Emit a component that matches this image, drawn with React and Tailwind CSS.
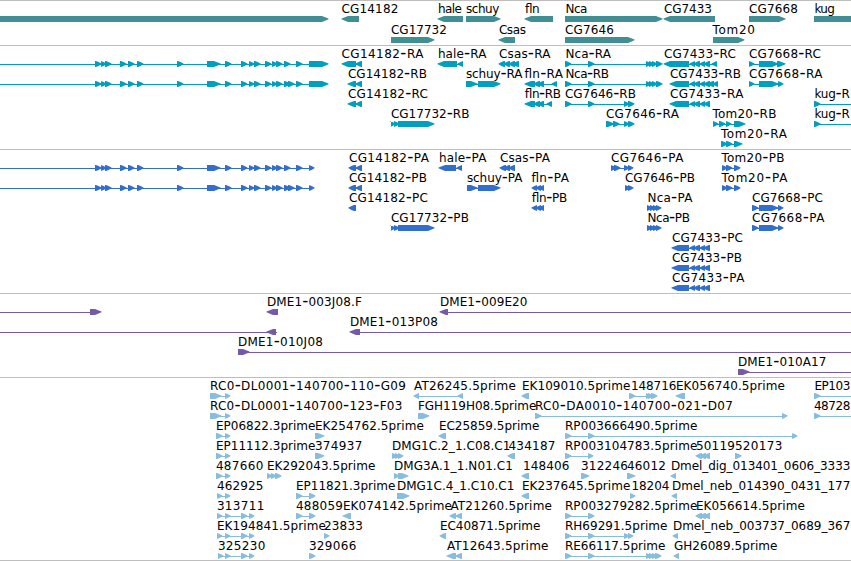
import React from 'react'

const WIDTH = 851
const R = 1
const L = -1

// exon sets shared by several transcripts
const KUG_5 = [[95, 101], [101, 106], [105, 111], [120, 126], [128, 134], [137, 143], [177, 183], [207, 220], [225, 231], [241, 247], [249, 254], [254, 260], [265, 271], [272, 277], [276, 282], [284, 290]]
const NCA = [[565, 571], [588, 594], [646, 651], [649, 654], [652, 657], [656, 662]]
const NCA_P = [[647, 652], [650, 655], [653, 658], [656, 661]]
const CG7433 = [[690, 695], [694, 700], [700, 705], [704, 710]]
const CG7668 = [[759, 778], [778, 783]]
const TOM20_P = [[722, 727], [726, 732], [734, 740]]
const FLN_P = [[532, 537], [536, 541], [539, 544]]
const EP_3 = [[216, 222], [225, 230]]
const EST_4 = [[217, 222], [225, 230], [241, 247], [249, 254]]

// feature: [label, label start, label end, direction, exons, line start, line end]
const tracks = [
    {
        id: 'gene',
        color: 'text-[#3f8f94]',
        rowClass: 'h-[21px]',
        boxClass: 'h-[45px]',
        rows: [
            [
                ['', 0, 0, R, [[-9, 328]]],
                ['CG14182', 342, 398, L, [[342, 359]]],
                ['hale', 438.5, 461.5, L, [[438, 463]]],
                ['schuy', 466.5, 499, R, [[466, 500]]],
                ['fln', 525, 538.5, L, [[525, 553]]],
                ['Nca', 566, 587, R, [[565, 662]]],
                ['CG7433', 664.5, 711.5, L, [[664, 715]]],
                ['CG7668', 749.5, 797.5, R, [[749, 785]]],
                ['kug', 815, 834.5, R, [[814, 870]]],
            ],
            [
                ['CG17732', 391.5, 446.5, R, [[391, 434]]],
                ['Csas', 499.5, 525.5, L, [[499, 515]]],
                ['CG7646', 565.5, 613.5, R, [[565, 634]]],
                ['Tom20', 713, 754.5, R, [[713, 744]]],
            ],
        ],
    },
    {
        id: 'transcript',
        color: 'text-[#009fc0]',
        rowClass: 'h-5',
        boxClass: 'h-[104px]',
        rows: [
            [
                ['', 0, 0, R, [...KUG_5, [296, 302], [309, 328]], 0, 320],
                ['CG14182-RA', 342, 423, L, [[342, 356], [356, 362]]],
                ['hale-RA', 438.5, 486, L, [[438, 457], [458, 463]]],
                ['Csas-RA', 499.5, 550, L, [[499, 505], [504, 510], [509, 515], [513, 519]]],
                ['Nca-RA', 566, 610.5, R, NCA],
                ['CG7433-RC', 664.5, 735.5, L, [[664, 689], ...CG7433, [712, 717]]],
                ['CG7668-RC', 749.5, 820.5, R, [[749, 754], [759, 778], [777, 785]]],
            ],
            [
                ['', 0, 0, R, [...KUG_5, [288, 294], [296, 302], [309, 328]], 0, 320],
                ['CG14182-RB', 348.5, 426.5, L, [[348, 356], [356, 362]]],
                ['schuy-RA', 466.5, 522, R, [[466, 477], [478, 500]]],
                ['fln-RA', 525, 562.5, L, [[525, 535], [534, 540], [538, 544], [552, 557]]],
                ['Nca-RB', 566, 608.5, R, NCA],
                ['CG7433-RB', 670.5, 740.5, L, [[670, 689], ...CG7433, [708, 714], [713, 718]]],
                ['CG7668-RA', 749.5, 822, R, [[749, 754], ...CG7668]],
            ],
            [
                ['CG14182-RC', 348.5, 427.5, L, [[348, 356], [356, 362]]],
                ['fln-RB', 525, 560, L, [[525, 535], [534, 540], [538, 544], [547, 552]]],
                ['CG7646-RB', 565.5, 635.5, R, [[565, 571], [588, 594], [624, 629], [628, 634]]],
                ['CG7433-RA', 670.5, 743, L, [[670, 689], ...CG7433]],
                ['kug-R', 815, 849.5, R, [[814, 820]], 814, 851],
            ],
            [
                ['CG17732-RB', 391.5, 469, R, [[391, 395], [394, 399], [398, 434]]],
                ['CG7646-RA', 606.5, 678.5, R, [[606, 614], [613, 619], [624, 629], [628, 634]]],
                ['Tom20-RB', 713, 776, R, [[713, 718], [719, 725], [726, 731], [734, 745]]],
                ['kug-R', 815, 849.5, R, [[814, 820]], 814, 851],
            ],
            [
                ['Tom20-RA', 721.5, 786.5, R, [[721, 727], [726, 732], [734, 742]]],
            ],
        ],
    },
    {
        id: 'protein',
        color: 'text-[#326ecd]',
        rowClass: 'h-5',
        boxClass: 'h-[144px]',
        rows: [
            [
                ['', 0, 0, R, [...KUG_5, [296, 302], [309, 314]], 0, 309],
                ['CG14182-PA', 349.5, 428.5, L, [[349, 356], [356, 362]]],
                ['hale-PA', 439.5, 486, L, [[439, 456], [457, 462]]],
                ['Csas-PA', 500.5, 549.5, L, [[500, 506], [504, 510], [509, 515]]],
                ['CG7646-PA', 611.5, 683, R, [[611, 616], [614, 620], [624, 629], [628, 633]]],
                ['Tom20-PB', 722, 784, R, TOM20_P],
            ],
            [
                ['', 0, 0, R, [...KUG_5, [288, 294], [296, 302], [309, 314]], 0, 309],
                ['CG14182-PB', 349.5, 426.5, L, [[349, 356], [356, 362]]],
                ['schuy-PA', 467.5, 522, R, [[467, 477], [478, 500]]],
                ['fln-PA', 532, 568.5, L, FLN_P],
                ['CG7646-PB', 625.5, 694.5, R, [[625, 630], [628, 633]]],
                ['Tom20-PA', 722, 787, R, TOM20_P],
            ],
            [
                ['CG14182-PC', 349.5, 427.5, L, [[349, 356]]],
                ['fln-PB', 532, 566.5, L, FLN_P],
                ['Nca-PA', 648, 692, R, NCA_P],
                ['CG7668-PC', 752.5, 822.5, R, [[752, 758], ...CG7668]],
            ],
            [
                ['CG17732-PB', 391.5, 468.5, R, [[391, 395], [394, 399], [398, 434]]],
                ['Nca-PB', 648, 689.5, R, NCA_P],
                ['CG7668-PA', 752.5, 824, R, [[752, 758], ...CG7668]],
            ],
            [['CG7433-PC', 672.5, 742.5, L, [[672, 689], ...CG7433]]],
            [['CG7433-PB', 672.5, 741.5, L, [[672, 689], ...CG7433]]],
            [['CG7433-PA', 672.5, 744, L, [[672, 689], ...CG7433]]],
        ],
    },
    {
        id: 'bac',
        color: 'text-[#7759a9]',
        rowClass: 'h-5',
        boxClass: 'h-[84px]',
        rows: [
            [
                ['', 0, 0, R, [[90, 101]], 0, 95],
                ['DME1-003J08.F', 267.5, 361.5, L, [[267, 278]]],
                ['DME1-009E20', 440.5, 527, L, [[440, 448]], 445, 851],
            ],
            [
                ['', 0, 0, L, [[267, 276]], 0, 277],
                ['DME1-013P08', 350.5, 437.5, L, [[350, 360]], 355, 851],
            ],
            [['DME1-010J08', 238.5, 322.5, R, [[238, 249]], 240, 851]],
            [['DME1-010A17', 738.5, 826, R, [[738, 749]], 740, 851]],
        ],
    },
    {
        id: 'est',
        color: 'text-[#88bddd]',
        rowClass: 'h-5',
        boxClass: 'h-[184px] border-b',
        rows: [
            [
                ['RC0-DL0001-140700-110-G09', 210.5, 405.5, R, [[210, 221], [225, 230]]],
                ['AT26245.5prime', 414.5, 515.5, L, [[414, 419], [458, 463]]],
                ['EK109010.5prime', 522.5, 630, L, [[522, 529]]],
                ['148716', 631.5, 676, R, [[629, 635], [646, 651], [648, 653], [651, 657]]],
                ['EK056740.5prime', 676.5, 784.5, L, [[676, 685]]],
                ['EP103', 815, 850, R, [[814, 820]], 814, 851],
            ],
            [
                ['RC0-DL0001-140700-123-F03', 210.5, 402, R, [[210, 221], [225, 230]]],
                ['FGH119H08.5prime', 418.5, 536, R, [[418, 429]]],
                ['RC0-DA0010-140700-021-D07', 535.5, 732.5, R, [[535, 541], [782, 787]]],
                ['48728', 814.5, 850, R, [[814, 820]], 814, 851],
            ],
            [
                ['EP06822.3prime', 216.5, 315, R, EP_3],
                ['EK254762.5prime', 315.5, 423.5, R, [[315, 324]]],
                ['EC25859.5prime', 439.5, 539, L, [[439, 446]]],
                ['RP003666490.5prime', 565.5, 697, R, [[565, 571], [588, 594], [792, 797]]],
            ],
            [
                ['EP11112.3prime', 216.5, 315, R, EP_3],
                ['374937', 315.5, 362, R, [[315, 324]]],
                ['DMG1C.2_1.C08.C1', 392.5, 510, R, [[392, 397], [395, 400], [398, 403]]],
                ['434187', 509, 555, L, [[508, 515]]],
                ['RP003104783.5prime', 565.5, 697, R, [[565, 571], [588, 593]]],
                ['50119', 696.5, 734.5, L, [[696, 702], [700, 706], [704, 710]]],
                ['520173', 735.5, 782, R, [[735, 741]]],
            ],
            [
                ['487660', 216.5, 263, R, EP_3],
                ['EK292043.5prime', 267.5, 375, R, [[267, 272], [271, 276], [275, 281]]],
                ['DMG3A.1_1.N01.C1', 394.5, 512.5, R, [[394, 399], [398, 408]]],
                ['148406', 523.5, 569, L, [[522, 529]]],
                ['312246', 581.5, 627.5, R, [[581, 589]]],
                ['46012', 627.5, 665.5, R, [[627, 635]]],
                ['Dmel_dig_013401_0606_3333', 671.5, 850, L, [[671, 676]]],
            ],
            [
                ['462925', 217.5, 263, R, [[217, 222], [225, 230]]],
                ['EP11821.3prime', 296.5, 395, R, [[296, 302], [309, 315]]],
                ['DMG1C.4_1.C10.C1', 397.5, 514, R, [[397, 409]]],
                ['EK237645.5prime', 522.5, 630, L, [[522, 529]]],
                ['18204', 632, 669, R, [[630, 635]]],
                ['Dmel_neb_014390_0431_177', 672.5, 850, L, [[672, 677]]],
            ],
            [
                ['313711', 217.5, 264, R, EST_4],
                ['488059', 296.5, 342.5, R, [[296, 302], [309, 315]]],
                ['EK074142.5prime', 343.5, 451.5, L, [[343, 351]]],
                ['AT21260.5prime', 451, 551.5, L, [[450, 456], [456, 462]]],
                ['RP003279282.5prime', 565.5, 697, R, [[565, 571], [588, 594]]],
                ['EK056614.5prime', 696.5, 804.5, L, [[696, 702], [700, 706], [704, 710]]],
            ],
            [
                ['EK194841.5prime', 217.5, 325.5, R, EST_4],
                ['23833', 324.5, 362.5, R, [[324, 329]]],
                ['EC40871.5prime', 440.5, 540, L, [[440, 446]]],
                ['RH69291.5prime', 565.5, 667, R, [[565, 571], [588, 594], [624, 629], [628, 633]]],
                ['Dmel_neb_003737_0689_367', 673.5, 850, L, [[673, 678]]],
            ],
            [
                ['325230', 218.5, 265, R, [[218, 223], [225, 230], [241, 247], [249, 254]]],
                ['329066', 309.5, 356, R, [[309, 315]]],
                ['AT12643.5prime', 447.5, 548, L, [[447, 456], [456, 462]]],
                ['RE66117.5prime', 565.5, 665, R, [[565, 571], [588, 594], [646, 651], [649, 654], [652, 657], [655, 661]]],
                ['GH26089.5prime', 674.5, 777, L, [[674, 679]]],
            ],
        ],
    },
]

function Exon({ from, to, dir }) {
    const long = to - from > 7
    const tip = dir === R ? to : from
    const tail = dir === R ? from : to
    // distances back from the tip
    const shoulder = tip - dir * (long ? 6 : 5)
    const mid = tip - dir * (long ? 3.5 : 2.5)
    const points = `${tail},14 ${shoulder},14 ${mid},14.9 ${tip + dir * 0.5},16.4 ${tip + dir * 0.5},17.2 ${mid},18.9 ${shoulder},20 ${tail},20`
    return <polygon points={points} />
}

function Label({ x, length, text }) {
    return (
        <text x={x} y="11" textLength={length} className="fill-black">
            {text.split(/(-)/).map((part, i) => (
                part === '-' ? <tspan key={i} className="text-[17px]">-</tspan> : <tspan key={i}>{part}</tspan>
            ))}
        </text>
    )
}

function Feature({ feature }) {
    const [label, start, end, dir, exons, lineFrom, lineTo] = feature
    const x1 = lineFrom ?? exons[0][0] + 1
    const x2 = lineTo ?? exons[exons.length - 1][1] - 1
    return (
        <g>
            {(exons.length > 1 || lineTo) && <rect x={x1} y="17" width={x2 - x1} height="1" />}
            {exons.map(([from, to], i) => <Exon key={i} from={from} to={to} dir={dir} />)}
            {label && <Label x={start - 0.6} length={end - start + 1} text={label} />}
        </g>
    )
}

function Track({ track }) {
    return (
        <section className={`border-t border-[#bebebe] pt-px ${track.boxClass}`}>
            {track.rows.map((row, i) => (
                <div key={i} className={track.rowClass}>
                    <svg width={WIDTH} height="20" className={`block overflow-visible fill-current ${track.color}`}>
                        {row.map((feature, j) => <Feature key={j} feature={feature} />)}
                    </svg>
                </div>
            ))}
        </section>
    )
}

export default function App() {
    return (
        <div className="h-[561px] w-[851px] overflow-hidden bg-white font-['DejaVu_Sans',sans-serif] text-[12px]">
            {tracks.map(track => <Track key={track.id} track={track} />)}
        </div>
    )
}
